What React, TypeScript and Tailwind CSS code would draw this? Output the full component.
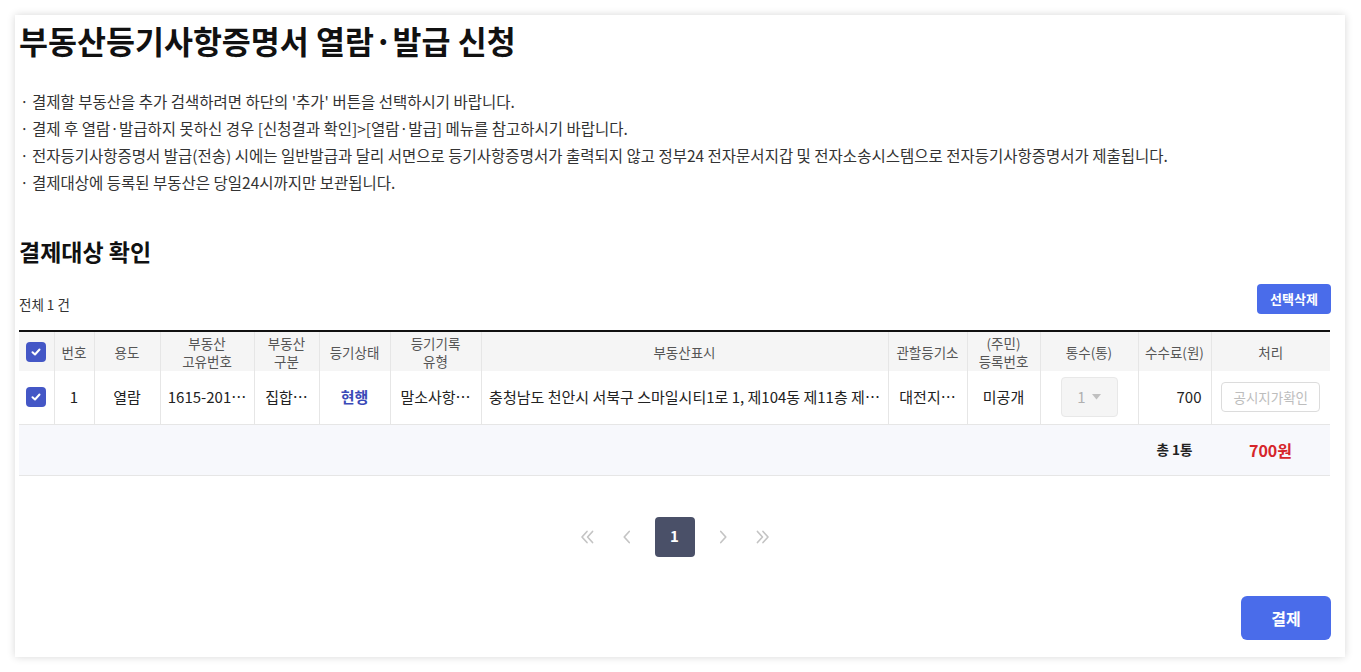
import React from "react";

const Check = () => (
  <span className="inline-flex h-[20px] w-[20px] items-center justify-center rounded-[4px] bg-[#4457c6]">
    <svg width="12" height="12" viewBox="0 0 12 12" fill="none">
      <path d="M2.5 6.2 L5 8.5 L9.5 3.5" stroke="white" strokeWidth="2" strokeLinecap="round" strokeLinejoin="round" />
    </svg>
  </span>
);

const Chev = ({ dir, double }: { dir: "l" | "r"; double?: boolean }) => (
  <svg width="20" height="20" viewBox="0 0 18 18" fill="none" stroke="#c4c4c4" strokeWidth="1.5" strokeLinecap="round" strokeLinejoin="round">
    {dir === "l" ? (
      double ? (
        <>
          <path d="M9 4 L4.5 9 L9 14" />
          <path d="M14 4 L9.5 9 L14 14" />
        </>
      ) : (
        <path d="M11 4 L6.5 9 L11 14" />
      )
    ) : double ? (
      <>
        <path d="M4 4 L8.5 9 L4 14" />
        <path d="M9 4 L13.5 9 L9 14" />
      </>
    ) : (
      <path d="M7 4 L11.5 9 L7 14" />
    )}
  </svg>
);

const bullets = [
  "결제할 부동산을 추가 검색하려면 하단의 '추가' 버튼을 선택하시기 바랍니다.",
  "결제 후 열람·발급하지 못하신 경우 [신청결과 확인]>[열람·발급] 메뉴를 참고하시기 바랍니다.",
  "전자등기사항증명서 발급(전송) 시에는 일반발급과 달리 서면으로 등기사항증명서가 출력되지 않고 정부24 전자문서지갑 및 전자소송시스템으로 전자등기사항증명서가 제출됩니다.",
  "결제대상에 등록된 부동산은 당일24시까지만 보관됩니다.",
];

export default function App() {
  const th = "border-x border-[#e6e6e6] text-[13.5px] font-normal leading-[18px] text-[#555] text-center align-middle px-1";
  const td = "border-x border-[#e6e6e6] text-[15px] text-center align-middle whitespace-nowrap overflow-hidden px-1";
  const dark = " text-[#222]";
  return (
    <div className="min-h-[672px] w-[1361px] bg-white pt-[15px] font-['Noto_Sans_CJK_KR','Noto_Sans',sans-serif]">
      <div className="ml-[15px] h-[642px] w-[1330px] bg-white pl-[4px] pr-[15px] pt-[5px] shadow-[0_0_8px_rgba(0,0,0,0.16)]">
        <h1 className="text-[31.5px] font-bold leading-[40px] text-[#111]">
          부동산등기사항증명서 열람·발급 신청
        </h1>
        <ul className="mt-[28px] text-[15.5px] leading-[27px] text-[#333]">
          {bullets.map((b) => (
            <li key={b} className="flex">
              <span className="w-[13px] shrink-0 pl-[1px]">·</span>
              <span>{b}</span>
            </li>
          ))}
        </ul>
        <h2 className="mt-[40px] text-[23px] font-bold leading-[30px] text-[#111]">결제대상 확인</h2>
        <div className="mt-[18px] flex items-end justify-between">
          <span className="text-[13.5px] leading-[20px] text-[#333]">전체 1 건</span>
          <button className="mr-[-1px] h-[30px] w-[74px] rounded-[4px] bg-[#4a6cea] text-[13px] font-bold text-white">선택삭제</button>
        </div>
        <table className="mt-[16px] w-[1311px] table-fixed border-collapse border-t-2 border-[#111]">
          <colgroup>
            <col className="w-[35px]" />
            <col className="w-[40px]" />
            <col className="w-[66px]" />
            <col className="w-[94px]" />
            <col className="w-[65px]" />
            <col className="w-[71px]" />
            <col className="w-[91px]" />
            <col className="w-[407px]" />
            <col className="w-[79px]" />
            <col className="w-[73px]" />
            <col className="w-[98px]" />
            <col className="w-[73px]" />
            <col className="w-[119px]" />
          </colgroup>
          <thead>
            <tr className="h-[40px] bg-[#f5f5f5]">
              <th className={th + " border-l-0"}>
                <div className="flex justify-center"><Check /></div>
              </th>
              <th className={th}>번호</th>
              <th className={th}>용도</th>
              <th className={th}>부동산<br />고유번호</th>
              <th className={th}>부동산<br />구분</th>
              <th className={th}>등기상태</th>
              <th className={th}>등기기록<br />유형</th>
              <th className={th}>부동산표시</th>
              <th className={th}>관할등기소</th>
              <th className={th}>(주민)<br />등록번호</th>
              <th className={th}>통수(통)</th>
              <th className={th}>수수료(원)</th>
              <th className={th + " border-r-0"}>처리</th>
            </tr>
          </thead>
          <tbody>
            <tr className="h-[53px] border-b border-[#e6e6e6]">
              <td className={td + dark + " border-l-0"}>
                <div className="flex justify-center"><Check /></div>
              </td>
              <td className={td + dark}>1</td>
              <td className={td + dark}>열람</td>
              <td className={td + dark}>1615-201…</td>
              <td className={td + dark}>집합…</td>
              <td className={td + " font-bold text-[#3a4ab8]"}>현행</td>
              <td className={td + dark}>말소사항…</td>
              <td className={td + dark}>충청남도 천안시 서북구 스마일시티1로 1, 제104동 제11층 제…</td>
              <td className={td + dark}>대전지…</td>
              <td className={td + dark}>미공개</td>
              <td className={td}>
                <div className="mx-auto flex h-[40px] w-[57px] items-center justify-center gap-[6px] rounded-[4px] border border-[#e8e8e8] bg-[#f5f5f5] text-[15px] text-[#b0b0b0]">
                  <span>1</span>
                  <svg width="9" height="6" viewBox="0 0 9 6"><path d="M0 0 H9 L4.5 5.5 Z" fill="#c0c0c0" /></svg>
                </div>
              </td>
              <td className={td + dark + " pr-[9px] text-right"}>700</td>
              <td className={td + " border-r-0"}>
                <button className="h-[30px] w-[99px] rounded-[4px] border border-[#dcdcdc] bg-white text-[13.5px] text-[#bdbdbd]">공시지가확인</button>
              </td>
            </tr>
            <tr className="h-[51px] border-b border-[#e6e6e6] bg-[#f7f8fc]">
              <td colSpan={11}></td>
              <td className="text-center text-[13.5px] font-bold text-[#222]">총 1통</td>
              <td className="text-center text-[16px] font-bold text-[#d6262b]">700원</td>
            </tr>
          </tbody>
        </table>
        <div className="mt-[41px] flex items-center justify-center gap-[8px]">
          <span className="flex h-[40px] w-[32px] items-center justify-center"><Chev dir="l" double /></span>
          <span className="flex h-[40px] w-[32px] items-center justify-center"><Chev dir="l" /></span>
          <span className="mx-[4px] flex h-[40px] w-[40px] items-center justify-center rounded-[4px] bg-[#4a5068] text-[15px] font-bold text-white">1</span>
          <span className="flex h-[40px] w-[32px] items-center justify-center"><Chev dir="r" /></span>
          <span className="flex h-[40px] w-[32px] items-center justify-center"><Chev dir="r" double /></span>
        </div>
        <div className="mt-[39px] flex justify-end">
          <button className="mr-[-1px] h-[44px] w-[90px] rounded-[6px] bg-[#4a6cea] text-[16px] font-bold text-white">결제</button>
        </div>
      </div>
    </div>
  );
}
